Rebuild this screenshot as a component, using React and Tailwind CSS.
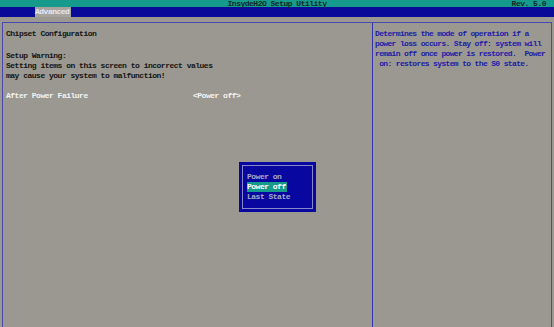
import React from "react";

const mono = { fontFamily: '"Liberation Mono", "DejaVu Sans Mono", monospace' };

const helpLines = [
  "Determines the mode of operation if a",
  "power loss occurs. Stay off: system will",
  "remain off once power is restored.  Power",
  " on: restores system to the S0 state.",
];

const App = () => {
  return (
    <div
      style={mono}
      className="relative w-[554px] h-[327px] overflow-hidden bg-[#9a9890] text-[8px] tracking-[-0.5px] leading-[10px] font-bold"
    >
      {/* title bar */}
      <div className="flex h-[7px] items-center bg-[#169a8c] text-[#0c2a28] leading-[7px]">
        <p className="flex-1 pl-[62px] text-center">InsydeH2O Setup Utility</p>
        <p className="w-[62px] pr-[8px] text-right">Rev. 5.0</p>
      </div>

      {/* menu bar */}
      <div className="flex h-[10px] bg-[#0a0a98]">
        <p className="ml-[35px] w-[36px] bg-[#a6a49c] text-[#e8e8f4] leading-[10px]">Advanced</p>
      </div>

      {/* frame */}
      <div className="mt-[5px] mx-[2px] flex h-[310px] border-t border-l border-r border-[#4848b0]">
        <div className="flex-1 pl-[3px] pt-[6px] text-[#141414] whitespace-pre">
          <p>Chipset Configuration</p>
          <p className="mt-[12px]">Setup Warning:</p>
          <p>Setting items on this screen to incorrect values</p>
          <p>may cause your system to malfunction!</p>
          <p className="mt-[10px] flex text-[#f4f4f4]">
            <span className="w-[187px]">After Power Failure</span>
            <span>&lt;Power off&gt;</span>
          </p>
        </div>
        <div className="w-[179px] border-l border-[#3434b0] pl-[2px] pt-[6px] tracking-[-0.65px] text-[#1c1ca8] whitespace-pre">
          {helpLines.map((l) => (
            <p key={l}>{l}</p>
          ))}
        </div>
      </div>

      {/* popup */}
      <div className="absolute left-[239px] top-[162px] w-[77px] h-[50px] bg-[#0808a0] p-[3px]">
        <div className="h-full border border-[#8888c8] pt-[6px] pl-[4px]">
          <p className="text-[#a8a8c8]">Power on</p>
          <p className="w-fit bg-[#169a8c] text-white pr-[1px]">Power off</p>
          <p className="text-[#a8a8c8]">Last State</p>
        </div>
      </div>
    </div>
  );
};

export default App;
